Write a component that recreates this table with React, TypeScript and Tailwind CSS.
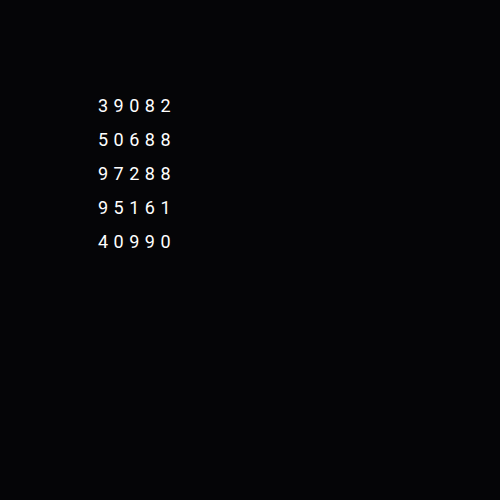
export default function App() {
  const codes = ['39082', '50688', '97288', '95161', '40990'];

  return (
    <div className="w-[500px] h-[500px] bg-[#050507] pt-[95px] pl-[98px]">
      <div className="flex flex-col gap-[12px] font-['Roboto',sans-serif] text-[18px] leading-[22px] tracking-[5.5px] text-white">
        {codes.map((c) => (
          <div key={c}>{c}</div>
        ))}
      </div>
    </div>
  );
}
